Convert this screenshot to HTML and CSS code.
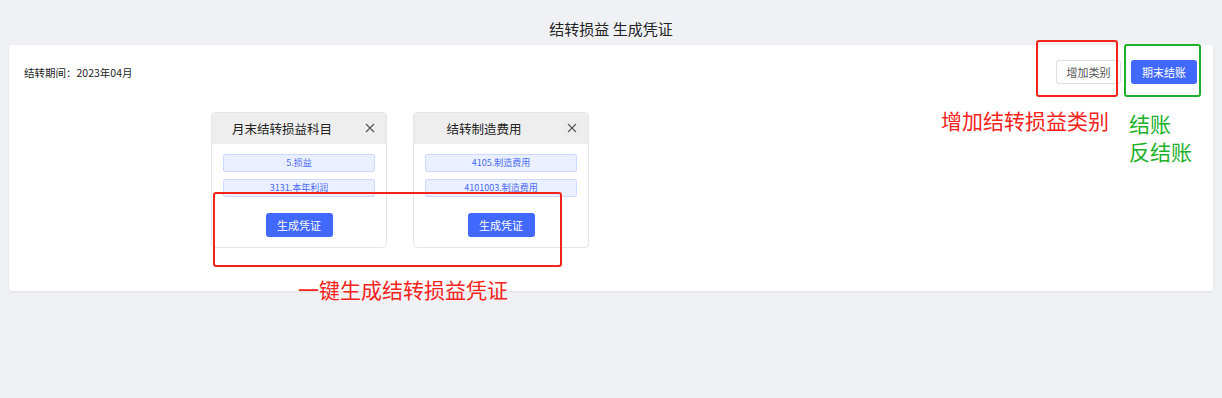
FILE: index.html
```html
<!DOCTYPE html>
<html lang="zh">
<head>
    <meta charset="UTF-8">
    <title>结转损益 生成凭证</title>
    <link rel="stylesheet" href="styles.css">
</head>
<body>
    <div class="page-title">结转损益 生成凭证</div>

    <div class="panel">
        <div class="panel-top">
            <div class="period">结转期间：2023年04月</div>
            <div class="actions">
                <button class="btn btn-plain">增加类别</button>
                <button class="btn btn-primary">期末结账</button>
            </div>
        </div>

        <div class="cards">
            <div class="card">
                <div class="card-head">
                    <span class="card-title">月末结转损益科目</span>
                    <svg class="card-close" width="10" height="10" viewBox="0 0 10 10"><path d="M1 1L9 9M9 1L1 9" stroke="#555" stroke-width="1.1"/></svg>
                </div>
                <div class="card-body">
                    <div class="tag">5.损益</div>
                    <div class="tag">3131.本年利润</div>
                    <button class="btn btn-primary btn-voucher">生成凭证</button>
                </div>
            </div>
            <div class="card">
                <div class="card-head">
                    <span class="card-title">结转制造费用</span>
                    <svg class="card-close" width="10" height="10" viewBox="0 0 10 10"><path d="M1 1L9 9M9 1L1 9" stroke="#555" stroke-width="1.1"/></svg>
                </div>
                <div class="card-body">
                    <div class="tag">4105.制造费用</div>
                    <div class="tag">4101003.制造费用</div>
                    <button class="btn btn-primary btn-voucher">生成凭证</button>
                </div>
            </div>
        </div>
    </div>

    <!-- annotations drawn over the screenshot -->
    <div class="mark mark-red mark-add"></div>
    <div class="mark mark-green mark-close"></div>
    <div class="mark mark-red mark-cards"></div>
    <div class="note note-red note-add">增加结转损益类别</div>
    <div class="note note-green note-close">结账<br>反结账</div>
    <div class="note note-red note-cards">一键生成结转损益凭证</div>
</body>
</html>
```

FILE: styles.css
```css
body {
    margin: 0;
    background-color: #f0f1f5;
    font-family: "Noto Sans CJK SC", "Noto Sans", sans-serif;
    color: #333;
    position: relative;
    height: 398px;
    overflow: hidden;
}
.page-title {
    height: 45px;
    line-height: 57px;
    text-align: center;
    font-size: 15px;
    color: #222;
}
.panel {
    margin: 0 9px;
    height: 246px;
    background: white;
    border-radius: 3px;
    box-shadow: 0 1px 3px rgba(0,0,0,0.08);
}
.panel-top {
    display: flex;
    justify-content: space-between;
    align-items: center;
    padding: 15px 16px 0 15px;
}
.period {
    font-size: 10.5px;
    color: #222;
}
.actions {
    display: flex;
    gap: 10px;
}
.btn {
    font-family: inherit;
    font-size: 11px;
    height: 24px;
    border-radius: 3px;
    cursor: pointer;
    padding: 0;
}
.btn-plain {
    width: 65px;
    background: white;
    border: 1px solid #dcdfe6;
    color: #555;
}
.btn-primary {
    width: 66px;
    background-color: #4169ff;
    border: none;
    color: white;
}
.cards {
    display: flex;
    gap: 26px;
    padding: 28px 0 0 202px;
}
.card {
    width: 176px;
    height: 136px;
    border: 1px solid #e3e5ee;
    border-radius: 4px;
    box-sizing: border-box;
    overflow: hidden;
}
.card-head {
    height: 31px;
    background: #eeeeee;
    display: flex;
    align-items: center;
    justify-content: center;
    padding-right: 34px;
    position: relative;
}
.card-title {
    font-size: 12.5px;
    color: #222;
}
.card-close {
    position: absolute;
    right: 11px;
    top: 10px;
}
.card-body {
    display: flex;
    flex-direction: column;
    align-items: center;
    padding: 10px 11px 0 11px;
    gap: 7px;
}
.tag {
    width: 100%;
    height: 18px;
    line-height: 16px;
    box-sizing: border-box;
    background: #eaf0ff;
    border: 1px solid #cdd9ff;
    border-radius: 2px;
    text-align: center;
    font-size: 9px;
    color: #4a6cf7;
}
.btn-voucher {
    width: 67px;
    margin-top: 9px;
}
.mark {
    position: absolute;
    border-width: 2px;
    border-style: solid;
    border-radius: 3px;
    box-sizing: border-box;
}
.mark-red {
    border-color: #f5231b;
}
.mark-green {
    border-color: #22b02a;
}
.mark-add {
    left: 1036px;
    top: 40px;
    width: 82px;
    height: 57px;
}
.mark-close {
    left: 1124px;
    top: 44px;
    width: 77px;
    height: 53px;
}
.mark-cards {
    left: 213px;
    top: 192px;
    width: 349px;
    height: 75px;
}
.note {
    position: absolute;
    font-size: 21px;
    line-height: 28px;
    white-space: nowrap;
}
.note-red {
    color: #f5231b;
}
.note-green {
    color: #22b02a;
}
.note-add {
    left: 941px;
    top: 106px;
}
.note-close {
    left: 1129px;
    top: 109px;
}
.note-cards {
    left: 298px;
    top: 275px;
}
```
